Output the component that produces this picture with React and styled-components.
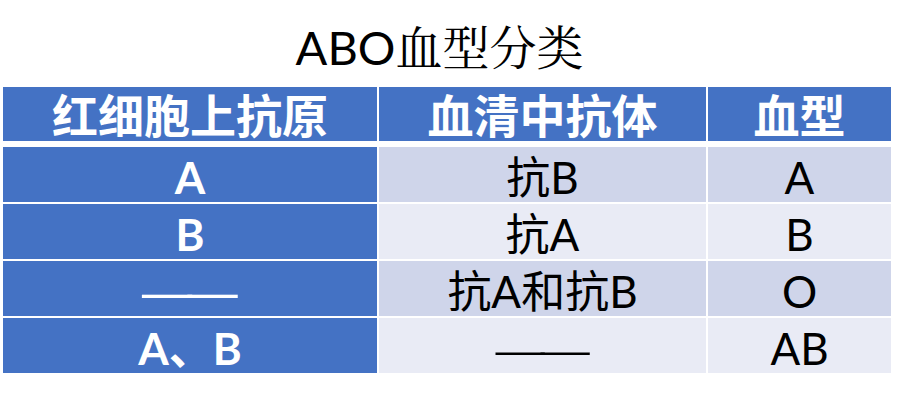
import styled, { createGlobalStyle } from 'styled-components';

const GlobalStyle = createGlobalStyle`
  html, body {
    margin: 0;
    padding: 0;
    background: #ffffff;
  }
`;

const colors = {
  blue: '#4472C4',
  band: '#CFD5EA',
  light: '#E9EBF5',
  white: '#ffffff',
  text: '#000000',
};

const sansStack = `"Lato", "Noto Sans CJK SC", sans-serif`;

const Page = styled.div`
  width: 897px;
  height: 404px;
  background: ${colors.white};
  display: flex;
  flex-direction: column;
`;

const Title = styled.h1`
  margin: 0;
  height: 87px;
  box-sizing: border-box;
  padding: 8px 18px 0 0;
  display: flex;
  align-items: center;
  justify-content: center;
  font-family: "Lato", "Noto Serif CJK SC", "Noto Sans CJK SC", serif;
  font-weight: 400;
  font-size: 47px;
  line-height: 1;
  color: ${colors.text};
`;

const Table = styled.div`
  display: flex;
  flex-direction: column;
  gap: 2px;
  margin-left: 3px;
  width: 888px;
`;

const Row = styled.div`
  display: grid;
  grid-template-columns: 374px 327px 183px;
  column-gap: 2px;
  height: ${props => (props.$head ? '54px' : '55px')};
  margin-bottom: ${props => (props.$head ? '4px' : '0')};
`;

const Cell = styled.div`
  display: flex;
  align-items: center;
  justify-content: center;
  padding-top: 4px;
  box-sizing: border-box;
  font-family: ${sansStack};
  font-size: ${props => (props.$head ? '46px' : '44px')};
  line-height: 1;
  white-space: nowrap;
  font-weight: ${props => (props.$head || props.$key ? 700 : 400)};
  color: ${props => (props.$head || props.$key ? colors.white : colors.text)};
  background: ${props => {
    if (props.$head || props.$key) return colors.blue;
    return props.$odd ? colors.band : colors.light;
  }};
`;

// the long dash in the table is two em dashes, joined and stretched to the width they have on the slide
const Dash = styled.span`
  font-family: "Lato", sans-serif;
  font-size: 38px;
  line-height: 1;
  letter-spacing: -7px;
  padding-right: 7px;
  display: inline-block;
  transform: translateY(2px) scaleX(1.95);
`;

const rows = [
  { antigen: 'A', antibody: '抗B', type: 'A' },
  { antigen: 'B', antibody: '抗A', type: 'B' },
  { antigen: '——', antibody: '抗A和抗B', type: 'O' },
  { antigen: 'A、B', antibody: '——', type: 'AB' },
];

const renderText = text => (text === '——' ? <Dash>{text}</Dash> : text);

export default function App() {
  return (
    <Page>
      <GlobalStyle />
      <Title>ABO血型分类</Title>
      <Table>
        <Row $head>
          <Cell $head>红细胞上抗原</Cell>
          <Cell $head>血清中抗体</Cell>
          <Cell $head>血型</Cell>
        </Row>
        {rows.map((r, i) => (
          <Row key={i}>
            <Cell $key>{renderText(r.antigen)}</Cell>
            <Cell $odd={i % 2 === 0}>{renderText(r.antibody)}</Cell>
            <Cell $odd={i % 2 === 0}>{r.type}</Cell>
          </Row>
        ))}
      </Table>
    </Page>
  );
}
